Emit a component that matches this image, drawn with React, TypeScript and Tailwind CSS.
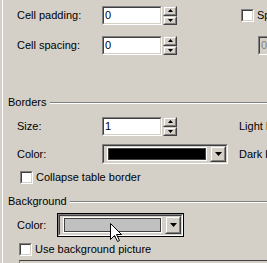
const sunkenOuter = 'border border-t-[#808080] border-l-[#808080] border-r-white border-b-white';
const sunkenInner = 'border border-t-[#404040] border-l-[#404040] border-r-[#d4d0c8] border-b-[#d4d0c8]';
const raisedOuter = 'border border-t-[#d4d0c8] border-l-[#d4d0c8] border-r-[#404040] border-b-[#404040]';
const raisedInner = 'border border-t-white border-l-white border-r-[#808080] border-b-[#808080]';

function Field({ value, disabled, width = 60 }: { value: string; disabled?: boolean; width?: number }) {
  return (
    <div className={`${sunkenOuter} h-[19px] shrink-0`} style={{ width }}>
      <div
        className={`${sunkenInner} h-full flex items-center pl-[1px] ${
          disabled ? 'bg-[#d4d0c8] text-[#808080]' : 'bg-white text-black'
        }`}
      >
        {value}
      </div>
    </div>
  );
}

function SpinBtn({ up }: { up?: boolean }) {
  return (
    <div className={`${raisedOuter} flex-1`}>
      <div className={`${raisedInner} h-full flex items-center justify-center bg-[#d4d0c8]`}>
        <svg width="5" height="3" viewBox="0 0 5 3">
          <path d={up ? 'M2.5 0 L5 3 L0 3 Z' : 'M0 0 L5 0 L2.5 3 Z'} fill="#000" />
        </svg>
      </div>
    </div>
  );
}

function Spinner() {
  return (
    <div className="ml-[1px] w-[14px] h-[19px] flex flex-col shrink-0">
      <SpinBtn up />
      <SpinBtn />
    </div>
  );
}

function CheckBox() {
  return (
    <div className={`${sunkenOuter} w-[13px] h-[13px] shrink-0`}>
      <div className={`${sunkenInner} h-full bg-white`} />
    </div>
  );
}

function DropBtn() {
  return (
    <div className={`${raisedOuter} w-[16px] h-full shrink-0`}>
      <div className={`${raisedInner} h-full flex items-center justify-center bg-[#d4d0c8]`}>
        <svg width="7" height="4" viewBox="0 0 7 4">
          <path d="M0 0 L7 0 L3.5 4 Z" fill="#000" />
        </svg>
      </div>
    </div>
  );
}

// colour picker combo: swatch + drop button
function ColorCombo({ color, width, height }: { color: string; width: number; height: number }) {
  return (
    <div className={`${sunkenOuter} shrink-0`} style={{ width, height }}>
      <div className={`${sunkenInner} h-full flex bg-[#d4d0c8]`}>
        <div className="flex-1 py-[1px] pl-[3px] pr-[3px]">
          <div className="h-full border border-white">
            <div className="h-full border border-[#404040]" style={{ background: color }} />
          </div>
        </div>
        <DropBtn />
      </div>
    </div>
  );
}

function Heading({ text }: { text: string }) {
  return (
    <div className="flex items-center h-[13px] pl-[5px]">
      <span>{text}</span>
      <div className="flex-1 ml-[3px] border-t border-t-[#808080] border-b border-b-white" />
    </div>
  );
}

export default function App() {
  return (
    <div className="relative w-[267px] h-[263px] overflow-hidden bg-[#d4d0c8] pl-[2px] font-['Liberation_Sans',Tahoma,Arial,sans-serif] text-[11px] text-black select-none">
      <div className="h-full border-l border-l-white flex flex-col whitespace-nowrap">
        <div className="mt-[6px] flex items-center pl-[14px] h-[19px]">
          <span className="w-[85px] shrink-0">Cell padding:</span>
          <Field value="0" />
          <Spinner />
          <div className="ml-[64px] flex items-center">
            <CheckBox />
            <span className="ml-[3px]">Specify width:</span>
          </div>
        </div>

        <div className="mt-[11px] flex items-center pl-[14px] h-[19px]">
          <span className="w-[85px] shrink-0">Cell spacing:</span>
          <Field value="0" />
          <Spinner />
          <div className="ml-[81px]">
            <Field value="0" disabled width={50} />
          </div>
        </div>

        <div className="mt-[41px]">
          <Heading text="Borders" />
        </div>

        <div className="mt-[8px] flex items-center pl-[14px] h-[19px]">
          <span className="w-[85px] shrink-0">Size:</span>
          <Field value="1" />
          <Spinner />
          <span className="ml-[62px]">Light border:</span>
        </div>

        <div className="mt-[8px] flex items-center pl-[14px] h-[20px]">
          <span className="w-[85px] shrink-0">Color:</span>
          <ColorCombo color="#000000" width={126} height={20} />
          <span className="ml-[11px]">Dark border:</span>
        </div>

        <div className="mt-[7px] flex items-center pl-[17px] h-[13px]">
          <CheckBox />
          <span className="ml-[3px]">Collapse table border</span>
        </div>

        <div className="mt-[11px]">
          <Heading text="Background" />
        </div>

        <div className="mt-[5px] flex items-center pl-[14px] h-[24px]">
          <span className="w-[40px] shrink-0">Color:</span>
          <div className="border border-black">
            <ColorCombo color="#c0c0c0" width={125} height={22} />
          </div>
        </div>

        <div className="mt-[6px] flex items-center pl-[16px] h-[13px]">
          <CheckBox />
          <span className="ml-[3px]">Use background picture</span>
        </div>

        <div className="mt-[4px] ml-[16px] border-t border-t-[#404040] border-l border-l-[#808080] h-[4px]" />
      </div>

      {/* mouse pointer over the background colour combo */}
      <svg className="absolute left-[110px] top-[223px]" width="12" height="20" viewBox="0 0 12 20">
        <path
          d="M0.5 0.5 L0.5 16.5 L4.5 12.5 L7.5 18.5 L9.5 17.5 L6.5 11.5 L11.5 11.5 Z"
          fill="#fff"
          stroke="#000"
          strokeWidth="1"
        />
      </svg>
    </div>
  );
}
